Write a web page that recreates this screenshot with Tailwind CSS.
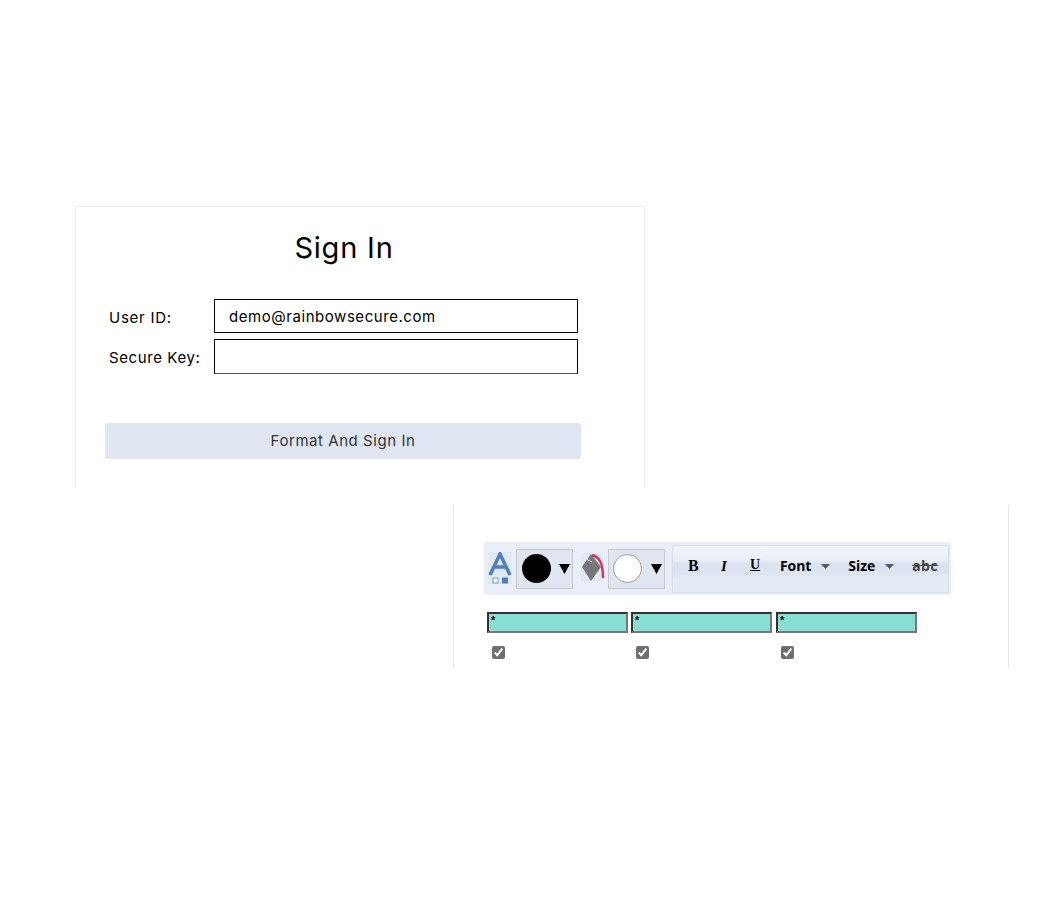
<!DOCTYPE html>
<html lang="en">
<head>
    <meta charset="UTF-8">
    <meta name="viewport" content="width=device-width, initial-scale=1.0">
    <title>Sign In</title>
    <script src="https://cdn.jsdelivr.net/npm/@tailwindcss/browser@4"></script>
</head>
<body class="bg-white font-['Inter',sans-serif] text-black">
    <div class="pt-[206px] pb-[248px]">
        <!-- sign in card -->
        <div class="ml-[75px] w-[570px] h-[282px] border-t border-x border-[#ececec] pl-[30px]">
            <h1 class="w-[476px] pt-[22px] text-center text-[29px] leading-[38px] tracking-[0.8px]">Sign In</h1>
            <form class="mt-[32px]">
                <div class="flex items-center h-[34px]">
                    <label for="user" class="pl-[3px] pt-[4px] w-[108px] text-[15px] tracking-[0.75px]">User ID:</label>
                    <input id="user" type="text" value="demo@rainbowsecure.com" class="w-[364px] h-[34px] border border-black pl-[14px] text-[15px] tracking-[0.55px]">
                </div>
                <div class="flex items-center h-[35px] mt-[6px]">
                    <label for="key" class="pl-[3px] pt-[4px] w-[108px] text-[15px] tracking-[0.6px] whitespace-nowrap">Secure Key:</label>
                    <input id="key" type="text" class="w-[364px] h-[35px] border border-black border-b-[#555]">
                </div>
                <button type="button" class="block mt-[49px] -ml-px w-[476px] h-[36px] rounded-[3px] bg-[#dfe6f2] text-[15px] tracking-[0.55px] text-[#333]">Format And Sign In</button>
            </form>
        </div>

        <!-- formatting card -->
        <div class="mt-[17px] ml-[453px] w-[556px] h-[163px] border-x border-[#e4e4e4] pl-[30px] pt-[37px]">
            <div class="flex items-center w-[467px] h-[53px] bg-[#e9eef7] rounded-[2px] pl-[4px]">
                <svg class="w-[24px] h-[32px] mt-[-2px]" viewBox="0 0 24 32">
                    <rect width="24" height="32" fill="#e3e9f4"/>
                    <path d="M2 23 L12 2 L22 23 M6 15 H18" fill="none" stroke="#4a7fc1" stroke-width="3.500"/>
                    <rect x="5" y="26" width="5" height="5" fill="#fff" stroke="#6fa0dc"/>
                    <rect x="14" y="25.500" width="6" height="6" fill="#4a7fc1"/>
                </svg>
                <div class="flex items-center w-[57px] h-[40px] ml-[4px] bg-[#dfe6f2] border border-[#c9c9c9] pl-[5px]">
                    <span class="block w-[29px] h-[29px] rounded-full bg-black"></span>
                    <svg class="w-[11px] h-[10px] ml-[8px]" viewBox="0 0 11 10"><path d="M0 0 H11 L5.500 10 Z" fill="#000"/></svg>
                </div>
                <svg class="w-[24px] h-[29px] ml-[8px] mt-[-2px]" viewBox="0 0 24 29">
                    <rect width="22" height="28" fill="#e3e9f4"/>
                    <path d="M10 1 L20 14 L10 28 L1 14 Z" fill="#777"/>
                    <path d="M5 6 L11 9" stroke="#ddd" stroke-width="1"/>
                    <path d="M11 2 C18 4 22 9 22 25" fill="none" stroke="#d8325f" stroke-width="2.500"/>
                </svg>
                <div class="flex items-center w-[57px] h-[40px] ml-[3px] bg-[#dfe6f2] border border-[#c9c9c9] pl-[4px]">
                    <span class="block w-[29px] h-[29px] rounded-full bg-white border border-[#999]"></span>
                    <svg class="w-[11px] h-[10px] ml-[9px]" viewBox="0 0 11 10"><path d="M0 0 H11 L5.500 10 Z" fill="#000"/></svg>
                </div>
                <div class="flex items-center w-[277px] h-[48px] ml-[7px] border border-[#d3ddee] bg-[linear-gradient(#f1f4fb_0%,#e9eef7_32%,#dbe3f0_38%,#dde5f1_62%,#e6ecf6_70%)] font-['Liberation_Serif',serif]">
                    <b class="ml-[15px] w-[12px] text-[16px] leading-[14px] mt-[-6px]">B</b>
                    <i class="ml-[21px] w-[10px] text-[15px] leading-[14px] mt-[-6px] font-bold">I</i>
                    <u class="ml-[19px] w-[12px] text-[14px] leading-[14px] mt-[-7px] font-bold">U</u>
                    <span class="ml-[18px] font-['Open_Sans',sans-serif] text-[14px] font-bold leading-[14px] mt-[-5px] tracking-[-0.1px]">Font</span>
                    <svg class="w-[9px] h-[5px] ml-[10px] mt-[-5px]" viewBox="0 0 9 5"><path d="M0 0 H9 L4.500 5 Z" fill="#4a5a78"/></svg>
                    <span class="ml-[18px] font-['Open_Sans',sans-serif] text-[14px] font-bold leading-[14px] mt-[-5px]">Size</span>
                    <svg class="w-[9px] h-[5px] ml-[10px] mt-[-5px]" viewBox="0 0 9 5"><path d="M0 0 H9 L4.500 5 Z" fill="#4a5a78"/></svg>
                    <s class="ml-[18px] font-['Open_Sans',sans-serif] text-[14px] font-bold leading-[14px] mt-[-5px] text-[#444] tracking-[0.3px]">abc</s>
                </div>
            </div>
            <div class="grid grid-cols-[144px_145px_141px] mt-[17px] ml-[3px] w-fit">
                <input type="text" value="*" class="w-[141px] h-[21px] bg-[#86dfd2] border-2 border-t-[#333] border-l-[#333] border-r-[#777] border-b-[#777] px-[2px] pb-[6px] text-[11px] font-bold font-['Liberation_Sans',sans-serif]">
                <input type="text" value="*" class="w-[141px] h-[21px] bg-[#86dfd2] border-2 border-t-[#333] border-l-[#333] border-r-[#777] border-b-[#777] px-[2px] pb-[6px] text-[11px] font-bold font-['Liberation_Sans',sans-serif]">
                <input type="text" value="*" class="w-[141px] h-[21px] bg-[#86dfd2] border-2 border-t-[#333] border-l-[#333] border-r-[#777] border-b-[#777] px-[2px] pb-[6px] text-[11px] font-bold font-['Liberation_Sans',sans-serif]">
                <label class="block mt-[13px] pl-[5px] h-[13px]"><input type="checkbox" checked class="block m-0 w-[13px] h-[13px] accent-[#6f6f6f]"></label>
                <label class="block mt-[13px] pl-[5px] h-[13px]"><input type="checkbox" checked class="block m-0 w-[13px] h-[13px] accent-[#6f6f6f]"></label>
                <label class="block mt-[13px] pl-[5px] h-[13px]"><input type="checkbox" checked class="block m-0 w-[13px] h-[13px] accent-[#6f6f6f]"></label>
            </div>
        </div>
    </div>
</body>
</html>
